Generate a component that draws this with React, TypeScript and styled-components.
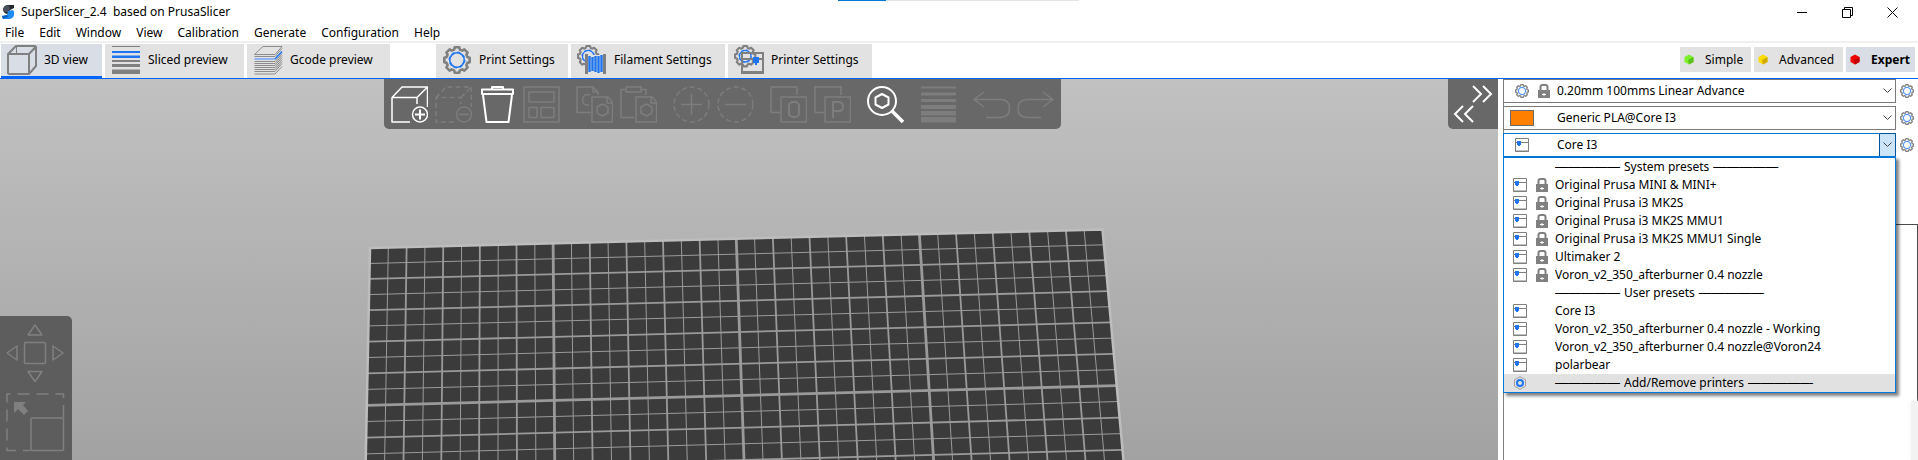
import React from "react";
import styled, { createGlobalStyle } from "styled-components";

const BLUE = "#1f75f0";
const ACCENT = "#0064ff";
const GREY = "#808080";

const GlobalStyle = createGlobalStyle`
  *, *::before, *::after { box-sizing: border-box; }
  html, body { margin: 0; background: #fff; }
  body, button, select {
    font-family: "Noto Sans", "Noto Sans CJK SC", sans-serif;
    font-size: 12px;
    line-height: 18px;
    color: #000;
  }
  button { border: 0; margin: 0; padding: 0; background: none; }
  svg { display: block; flex: none; }
`;

const Window = styled.div`
  display: flex;
  flex-direction: column;
  min-height: 100vh;
`;

const TitleBar = styled.header`
  position: relative;
  display: flex;
  align-items: center;
  height: 24px;
  padding: 0 20px 0 1px;
`;

const Title = styled.h1`
  margin: 0 auto 0 6px;
  font-size: 12px;
  font-weight: 400;
  white-space: pre;
`;

const LoadStrip = styled.div`
  position: absolute;
  top: 0;
  left: 50%;
  display: flex;
  width: 241px;
  height: 1px;
  margin-left: -121px;
  background: #e5e5e5;

  &::before {
    content: "";
    width: 48px;
    background: #0078d7;
  }
`;

const WindowControls = styled.div`
  display: flex;
  gap: 34px;
`;

const WindowButton = styled.button`
  width: 11px;
  height: 20px;
  display: grid;
  place-items: center;
`;

const MenuBar = styled.nav`
  display: flex;
  gap: 15px;
  height: 19px;
  padding: 0 5px;
  border-bottom: 2px solid #f0f0f0;
  line-height: 18px;
`;

const MenuItem = styled.button`
  line-height: 18px;
  height: 18px;
`;

const TabBar = styled.div`
  display: flex;
  align-items: stretch;
  height: 36px;
  padding: 1px 3px 0 1px;
  border-bottom: 1px solid ${ACCENT};
`;

const TabGroup = styled.div`
  display: flex;
  gap: 3px;
  margin-right: 46px;
`;

const ModeGroup = styled.div`
  display: flex;
  gap: 3px;
  margin-left: auto;
  padding-top: 3px;
`;

const Tab = styled.button<{ $active?: boolean; $width: number }>`
  display: flex;
  align-items: center;
  gap: 7px;
  width: ${(p) => p.$width}px;
  padding: 0 0 2px 6px;
  white-space: nowrap;
  background: ${(p) => (p.$active ? "#d9dde6" : "#e2e2e2")};
  box-shadow: ${(p) => (p.$active ? `inset 0 -2px ${ACCENT}` : "none")};
`;

const ModeButton = styled.button<{ $active?: boolean; $width: number }>`
  display: flex;
  align-items: center;
  gap: 10px;
  width: ${(p) => p.$width}px;
  height: 25px;
  padding-left: 4px;
  font-weight: ${(p) => (p.$active ? 700 : 400)};
  background: ${(p) => (p.$active ? "#d9dde6" : "#e2e2e2")};
`;

const Workspace = styled.main`
  display: flex;
  flex: 1;
`;

const Viewport = styled.section`
  position: relative;
  flex: 1;
  min-width: 0;
  background: linear-gradient(#c1c1c1, #a2a2a2);
`;

const Scene = styled.svg`
  position: absolute;
  inset: 0;
  width: 100%;
  height: 100%;
`;

const Overlay = styled.div`
  position: relative;
  display: flex;
  flex-direction: column;
  justify-content: space-between;
  height: 100%;
`;

const TopRow = styled.div`
  display: flex;
  align-items: flex-start;
`;

const ToolbarSlot = styled.div`
  display: flex;
  flex: 1;
  justify-content: center;
  padding-right: 4px;
`;

const Toolbar = styled.div`
  display: flex;
  gap: 16px;
  height: 50px;
  padding: 7px 7px 0;
  border-radius: 0 0 5px 5px;
  background: #686868;
`;

const ToolGroup = styled.div`
  display: flex;
  gap: 7px;
`;

const Tool = styled.button<{ $off?: boolean }>`
  width: 37px;
  height: 37px;
  color: ${(p) => (p.$off ? "#7d7d7d" : "#fff")};
`;

const Collapse = styled.button`
  width: 50px;
  height: 50px;
  border-radius: 0 0 0 5px;
  background: #686868;
  color: #fff;
`;

const Gizmos = styled.div`
  display: flex;
  flex-direction: column;
  align-self: flex-start;
  gap: 10px;
  width: 72px;
  padding: 8px 6px;
  border-radius: 0 5px 0 0;
  background: #5d5d5d;
`;

const Gizmo = styled.button`
  width: 59px;
  height: 59px;
  color: #808080;
`;

const Sidebar = styled.aside`
  display: flex;
  width: 420px;
  padding-left: 5px;
`;

const PresetColumn = styled.div`
  position: relative;
  display: flex;
  flex: 1;
  flex-direction: column;
  gap: 3px;
  border-left: 1px solid #808080;
`;

const PresetRow = styled.div`
  display: flex;
  align-items: center;
  gap: 4px;
  margin-left: -1px;
`;

const Combo = styled.div<{ $open?: boolean }>`
  position: relative;
  display: grid;
  width: 393px;
  height: 24px;
  border: 1px solid ${(p) => (p.$open ? "#0078d7" : "#7a7a7a")};
  background: #fff;

  & > * { grid-area: 1 / 1; }
`;

const ComboSelect = styled.select`
  width: 100%;
  height: 22px;
  padding: 0 24px 0 53px;
  border: 0;
  outline: 0;
  appearance: none;
  background: transparent;
`;

const ComboIcons = styled.span`
  display: flex;
  align-items: center;
  gap: 9px;
  padding-left: 11px;
  pointer-events: none;
`;

const Swatch = styled.span`
  width: 24px;
  height: 16px;
  margin-left: -5px;
  border: 1px solid #6b6b6b;
  background: #ff8000;
`;

const Chevron = styled.span<{ $open?: boolean }>`
  display: grid;
  place-items: center;
  justify-self: end;
  width: 17px;
  height: 24px;
  margin: -1px;
  border: 1px solid ${(p) => (p.$open ? "#005499" : "transparent")};
  background: ${(p) => (p.$open ? "#cce4f7" : "none")};
  pointer-events: none;
`;

const Popup = styled.ul`
  position: absolute;
  z-index: 2;
  top: 77px;
  left: -1px;
  width: 393px;
  margin: 0;
  padding: 0;
  list-style: none;
  border: 1px solid #0078d7;
  border-top-width: 2px;
  background: #fff;
  box-shadow: 3px 3px 3px rgba(0, 0, 0, 0.5);
`;

const Option = styled.li<{ $hover?: boolean }>`
  display: grid;
  grid-template-columns: 23px 19px 1fr;
  align-items: center;
  height: 18px;
  padding-left: 9px;
  white-space: nowrap;
  background: ${(p) => (p.$hover ? "#e1e1e1" : "#fff")};
`;

const OptionText = styled.span`
  display: flex;
  align-items: center;
  grid-column: 3;
  gap: 4px;
`;

const Dashes = styled.span`
  font-family: "Liberation Sans", Arial, sans-serif;
  font-size: 13px;
  line-height: 18px;
`;

const PlatePanel = styled.div`
  display: flex;
  flex: 1;
  justify-content: flex-end;
  margin-top: 64px;
`;

const PanelEdge = styled.div`
  width: 23px;
  height: 177px;
  border: solid #4c4c4c;
  border-width: 1px 1px 0 0;
`;

const PanelSide = styled.div`
  display: flex;
  flex-direction: column;
  align-items: flex-end;
`;

const PanelShade = styled.div`
  flex: 1;
  width: 7px;
  background: #f2f2f2;
  box-shadow: 0 0 5px #f2f2f2;
`;

/* ---------- icons ---------- */

const gearPath = (c: number, outer: number, inner: number) => {
  const pts: string[] = [];
  for (let i = 0; i < 8; i++) {
    const a = (i * Math.PI) / 4 - Math.PI / 2;
    [
      [-0.27, inner],
      [-0.18, outer],
      [0.18, outer],
      [0.27, inner],
    ].forEach(([d, r]) => {
      pts.push(`${(c + r * Math.cos(a + d)).toFixed(2)} ${(c + r * Math.sin(a + d)).toFixed(2)}`);
    });
  }
  return `M${pts.join("L")}Z`;
};

const GearShape = () => (
  <>
    <path d={gearPath(14, 12.9, 10.8)} fill="none" stroke={GREY} strokeWidth="2.6" strokeLinejoin="round" />
    <circle cx="14" cy="14" r="7.2" fill="none" stroke={BLUE} strokeWidth="1.6" />
    <circle cx="14" cy="14" r="8" fill="none" stroke={BLUE} strokeWidth="1" strokeDasharray="3.14 3.14" />
  </>
);

const Gear = () => (
  <svg width="14" height="14" viewBox="0 0 28 28">
    <GearShape />
  </svg>
);

const PrintTabIcon = () => (
  <svg width="30" height="30" viewBox="-1 -1 30 30">
    <GearShape />
  </svg>
);

const Cube = () => (
  <svg width="30" height="30" viewBox="0 0 30 30" fill="none" stroke={GREY} strokeWidth="2" strokeLinejoin="round">
    <path d="M1 9H22V29H2L1 28ZM1 9L9 1H28L29 2V21L22 29M22 9L29 1.5" />
    <path d="M9.5 1V9" strokeWidth="1" />
  </svg>
);

const SlicedIcon = () => (
  <svg width="30" height="30" viewBox="-1 -1 30 30">
    <path d="M0 0h28v1H0ZM0 14h28v2H0ZM0 18h28v3H0ZM0 23.5h28V28H0Z" fill={GREY} />
    <path d="M0 5h28v2H0ZM0 9.5h28v2.500H0Z" fill={BLUE} />
  </svg>
);

const LayersIcon = () => (
  <svg width="30" height="30" viewBox="-1 -1 30 30" fill="none" stroke="#8c8c8c" strokeWidth="1">
    <path d="M0.5 8.500L9 0.500H28L21 8.500Z" />
    {[10, 15, 17, 19, 21, 23, 25].map((y) => (
      <path key={y} d={`M0.5 ${y + 0.5}H21L28 ${y - 7.5}`} />
    ))}
    <path d="M0.5 28H21L28 20.500" />
    <path d="M0.5 13H21" stroke="#8fb4f2" strokeWidth="2" />
    <path d="M21 13L28 5.500" stroke={BLUE} strokeWidth="1.5" />
  </svg>
);

const FilamentIcon = () => (
  <svg width="30" height="30" viewBox="0 0 30 30">
    <g transform="scale(0.8)">
      <GearShape />
    </g>
    <path d="M10 10h17v17H10Z" fill="#e2e2e2" />
    <path d="M8 9h3v20H8ZM26 9h3v20h-3Z" fill={GREY} />
    <path d="M12.5 11V27M15.5 12V26M18.5 11V27M21.5 11V28M24.5 10V27" stroke={BLUE} strokeWidth="2.4" />
  </svg>
);

const PrinterTabIcon = () => (
  <svg width="30" height="30" viewBox="0 0 30 30">
    <g transform="scale(0.8)">
      <GearShape />
    </g>
    <path d="M8 8H29V28H8ZM8 14H29" fill="none" stroke={GREY} strokeWidth="2" />
    <path d="M8 26H29V29H8Z" fill={GREY} />
    <path d="M19 12h6v6h-2v2h-2v-2h-2Z" fill={BLUE} />
  </svg>
);

const PrinterIcon = () => (
  <svg width="14" height="14" viewBox="0 0 14 14">
    <path d="M0.5 0.500H13.500V13.500H0.500ZM0 4.500H14M0 13H14" fill="none" stroke={GREY} />
    <path d="M2 3h4v4H5v1H3V7H2Z" fill={BLUE} />
  </svg>
);

const LockIcon = () => (
  <svg width="12" height="14" viewBox="0 0 12 14">
    <path d="M2.5 7V3Q2.500 1 4.500 1H7.500Q9.500 1 9.500 3V7" fill="none" stroke={GREY} strokeWidth="2" />
    <path d="M0 6h12v8H0Z" fill={GREY} />
    <path d="M4 10.500h4M6 9v3" stroke="#fff" />
  </svg>
);

const WizardIcon = () => (
  <svg width="14" height="14" viewBox="0 0 14 14" fill="none">
    <path d="M7 0.700L12.500 3.800V10.200L7 13.300L1.500 10.200V3.800Z" stroke="#a0a0a0" />
    <circle cx="7" cy="7" r="3" stroke={BLUE} strokeWidth="2" />
  </svg>
);

const ModeDot = ({ light, dark }: { light: string; dark: string }) => (
  <svg width="11" height="11" viewBox="0 0 11 11">
    <path d="M5 0.500L9.500 3V8L5 10.500L0.500 8V3Z" fill={light} />
    <path d="M9.500 3V8L5 10.500L4 6Z" fill={dark} />
  </svg>
);

const Logo = () => (
  <svg width="14" height="16" viewBox="0 0 14 16">
    <path d="M13 1L6 1Q2 2 2 6Q3 10 7 10L9 6L13 4Z" fill="#23272e" />
    <path d="M2 6Q3 2 7 1L9 4L7 8Q4 9 2 6Z" fill="#4a515c" />
    <path d="M7 7L12 6Q14 8 13 11Q12 15 8 15L2 15L1 12L6 11Z" fill="#1d8bf0" />
    <path d="M1 12L6 11L7 13L2 15Z" fill="#0a5fc4" />
  </svg>
);

type ToolName =
  | "add" | "remove" | "trash" | "arrange" | "copy" | "paste" | "plus"
  | "minus" | "objects" | "parts" | "search" | "layers" | "undo" | "redo";

const BOX = "M19 36H1V11.500H26V18M1 11.500L11 1H36.500V21M26 11.500L36.500 1";
const PAGE = "M16 11H32L36.500 16V36H16ZM31 11V17H36M26.500 18L32 21V27L26.500 30L21 27V21Z";
const SQUARES = "M10 26.500H1V1H27V9M11 11H36.500V36H11Z";

const toolArt: Record<ToolName, React.ReactNode> = {
  add: (
    <>
      <path d={BOX} />
      <circle cx="29" cy="28.500" r="7.500" />
      <path d="M29 23.500V33.500M24 28.500H34" strokeWidth="2" />
    </>
  ),
  remove: (
    <>
      <path d={BOX} strokeDasharray="5 3" />
      <circle cx="29" cy="28.500" r="7.500" />
      <path d="M24 28.500H34" />
    </>
  ),
  trash: <path d="M3 3.500H34V8H3ZM13 3V1H24V3M4 9L7.500 36H29.500L33 9" strokeWidth="2" />,
  arrange: <path d="M1 1H36V36H1ZM6 6H31V16H6ZM6 21.500H14V31.500H6ZM18 21.500H31V31.500H18Z" />,
  copy: (
    <>
      <path d="M15 26.500H1V1H17L22 6V9M17 1V6H22M14 9Q7 7 6.500 14Q7 20 13 19" />
      <path d={PAGE} />
    </>
  ),
  paste: (
    <>
      <path d="M14 31.500H1V3.500H6M21 3.500H26V9M6 1H21V6H6Z" />
      <path d={PAGE} />
    </>
  ),
  plus: (
    <>
      <circle cx="18.500" cy="18.500" r="17.500" strokeDasharray="5 3" />
      <path d="M18.500 8V29M8 18.500H29" />
    </>
  ),
  minus: (
    <>
      <circle cx="18.500" cy="18.500" r="17.500" strokeDasharray="5 3" />
      <path d="M8 18.500H29" />
    </>
  ),
  objects: (
    <>
      <path d={SQUARES} />
      <rect x="19" y="16" width="10" height="15" rx="4" strokeWidth="2" />
    </>
  ),
  parts: (
    <>
      <path d={SQUARES} />
      <path d="M19 32V16H25Q29 16.500 29 20.500Q29 25 25 25H19" strokeWidth="2" />
    </>
  ),
  search: (
    <>
      <circle cx="15" cy="15" r="14" strokeWidth="2" />
      <path d="M15 8L21.500 11.500V18.500L15 22L8.500 18.500V11.500Z" strokeWidth="2" />
      <path d="M25 25L36 36" strokeWidth="3.500" />
    </>
  ),
  layers: (
    <path
      d="M1 0.500h35v2H1ZM1 6.500h35v3H1ZM1 13h35v3H1ZM1 19h35v4H1ZM1 25h35v4.500H1ZM1 31h35v5.500H1Z"
      fill="currentColor"
      stroke="none"
    />
  ),
  undo: <path d="M11 6L1 13.500L11 21M1 13.500H28Q36.500 14 36.500 22.500Q36.500 31 28 31.500H13" />,
  redo: <path d="M26 6L36 13.500L26 21M36 13.500H10Q1 14 1 22.500Q1 31 10 31.500H24" />,
};

const toolGroups: { name: ToolName; label: string; off?: boolean }[][] = [
  [
    { name: "add", label: "Add" },
    { name: "remove", label: "Delete", off: true },
    { name: "trash", label: "Delete all" },
    { name: "arrange", label: "Arrange", off: true },
  ],
  [
    { name: "copy", label: "Copy", off: true },
    { name: "paste", label: "Paste", off: true },
  ],
  [
    { name: "plus", label: "Add instance", off: true },
    { name: "minus", label: "Remove instance", off: true },
  ],
  [
    { name: "objects", label: "Split to objects", off: true },
    { name: "parts", label: "Split to parts", off: true },
  ],
  [{ name: "search", label: "Search" }],
  [{ name: "layers", label: "Variable layer height", off: true }],
  [
    { name: "undo", label: "Undo", off: true },
    { name: "redo", label: "Redo", off: true },
  ],
];

const ToolIcon = ({ name }: { name: ToolName }) => (
  <svg width="37" height="37" viewBox="0 0 37 37" fill="none" stroke="currentColor" strokeWidth="1.5" strokeLinejoin="round">
    {toolArt[name]}
  </svg>
);

/* ---------- print bed ---------- */

const CELLS = 40;
const ROWS = 15;
const bedTop = { lx: 370, ly: 169, rx: 1102.5, ry: 150.5 };
const bedLow = { lx: 365.2, ly: 407.5, rx: 1124, ry: 387 };

const lineWidth = (i: number) => (i % 10 === 0 ? 2.8 : i % 2 === 0 ? 1.8 : 1);
const mix = (a: number, b: number, t: number) => a + (b - a) * t;

const Bed = () => {
  const columns = Array.from({ length: CELLS - 1 }, (_, k) => k + 1);
  const rows = Array.from({ length: ROWS - 1 }, (_, k) => k + 1);
  const outline = `M${bedLow.lx} ${bedLow.ly}L${bedTop.lx} ${bedTop.ly}L${bedTop.rx} ${bedTop.ry}L${bedLow.rx} ${bedLow.ry}`;
  return (
    <Scene viewBox="0 0 1498 381" preserveAspectRatio="xMidYMin slice" aria-hidden="true">
      <path d={`${outline}Z`} fill="#3b3b3b" />
      <g stroke="#9a9a9a">
        {columns.map((i) => {
          const t = i / CELLS;
          return (
            <line
              key={i}
              x1={mix(bedTop.lx, bedTop.rx, t)}
              y1={mix(bedTop.ly, bedTop.ry, t)}
              x2={mix(bedLow.lx, bedLow.rx, t)}
              y2={mix(bedLow.ly, bedLow.ry, t)}
              strokeWidth={lineWidth(i)}
            />
          );
        })}
        {rows.map((j) => {
          const t = (j / ROWS) * (0.97 + 0.03 * (j / ROWS));
          return (
            <line
              key={j}
              x1={mix(bedTop.lx, bedLow.lx, t)}
              y1={mix(bedTop.ly, bedLow.ly, t)}
              x2={mix(bedTop.rx, bedLow.rx, t)}
              y2={mix(bedTop.ry, bedLow.ry, t)}
              strokeWidth={lineWidth(j)}
            />
          );
        })}
      </g>
      <path d={outline} fill="none" stroke="#bdbdbd" strokeWidth="2.5" />
    </Scene>
  );
};

/* ---------- data ---------- */

const menus = ["File", "Edit", "Window", "View", "Calibration", "Generate", "Configuration", "Help"];

type Preset = { text: string; kind: "system" | "user" | "heading" | "action" };

const presets: Preset[] = [
  { text: "System presets", kind: "heading" },
  { text: "Original Prusa MINI & MINI+", kind: "system" },
  { text: "Original Prusa i3 MK2S", kind: "system" },
  { text: "Original Prusa i3 MK2S MMU1", kind: "system" },
  { text: "Original Prusa i3 MK2S MMU1 Single", kind: "system" },
  { text: "Ultimaker 2", kind: "system" },
  { text: "Voron_v2_350_afterburner 0.4 nozzle", kind: "system" },
  { text: "User presets", kind: "heading" },
  { text: "Core I3", kind: "user" },
  { text: "Voron_v2_350_afterburner 0.4 nozzle - Working", kind: "user" },
  { text: "Voron_v2_350_afterburner 0.4 nozzle@Voron24", kind: "user" },
  { text: "polarbear", kind: "user" },
  { text: "Add/Remove printers", kind: "action" },
];

const PresetCombo = ({ label, value, icons, open }: { label: string; value: string; icons: React.ReactNode; open?: boolean }) => (
  <PresetRow>
    <Combo $open={open}>
      <ComboSelect aria-label={label} defaultValue={value}>
        <option>{value}</option>
      </ComboSelect>
      <ComboIcons>{icons}</ComboIcons>
      <Chevron $open={open}>
        <svg width="9" height="6" viewBox="0 0 9 6" fill="none" stroke="#444">
          <path d="M0.5 0.500L4.500 4.500L8.500 0.500" />
        </svg>
      </Chevron>
    </Combo>
    <button aria-label={`Edit ${label}`}>
      <Gear />
    </button>
  </PresetRow>
);

export default function App() {
  return (
    <Window>
      <GlobalStyle />
      <TitleBar>
        <LoadStrip />
        <Logo />
        <Title>{"SuperSlicer_2.4  based on PrusaSlicer"}</Title>
        <WindowControls>
          <WindowButton aria-label="Minimize">
            <svg width="11" height="11" stroke="#000"><path d="M0 5.500H10" /></svg>
          </WindowButton>
          <WindowButton aria-label="Restore">
            <svg width="11" height="11" stroke="#000" fill="none">
              <path d="M0.5 2.500H8.500V10.500H0.500ZM2.500 2.500V0.500H10.500V8.500H8.500" />
            </svg>
          </WindowButton>
          <WindowButton aria-label="Close">
            <svg width="11" height="11" stroke="#000"><path d="M0.5 0.500L10.500 10.500M10.500 0.500L0.500 10.500" /></svg>
          </WindowButton>
        </WindowControls>
      </TitleBar>
      <MenuBar>
        {menus.map((m) => <MenuItem key={m}>{m}</MenuItem>)}
      </MenuBar>
      <TabBar>
        <TabGroup>
          <Tab $active $width={101}><Cube />3D view</Tab>
          <Tab $width={139}><SlicedIcon />Sliced preview</Tab>
          <Tab $width={143}><LayersIcon />Gcode preview</Tab>
        </TabGroup>
        <TabGroup>
          <Tab $width={132}><PrintTabIcon />Print Settings</Tab>
          <Tab $width={154}><FilamentIcon />Filament Settings</Tab>
          <Tab $width={144}><PrinterTabIcon />Printer Settings</Tab>
        </TabGroup>
        <ModeGroup>
          <ModeButton $width={71}><ModeDot light="#7cf02c" dark="#5cbf1c" />Simple</ModeButton>
          <ModeButton $width={89}><ModeDot light="#ffdc00" dark="#d0aa00" />Advanced</ModeButton>
          <ModeButton $active $width={69}><ModeDot light="#f00000" dark="#c00000" />Expert</ModeButton>
        </ModeGroup>
      </TabBar>
      <Workspace>
        <Viewport>
          <Bed />
          <Overlay>
            <TopRow>
              <ToolbarSlot>
                <Toolbar>
                  {toolGroups.map((group) => (
                    <ToolGroup key={group[0].name}>
                      {group.map((t) => (
                        <Tool key={t.name} $off={t.off} disabled={t.off} aria-label={t.label}>
                          <ToolIcon name={t.name} />
                        </Tool>
                      ))}
                    </ToolGroup>
                  ))}
                </Toolbar>
              </ToolbarSlot>
              <Collapse aria-label="Collapse sidebar">
                <svg width="50" height="50" viewBox="0 0 50 50" fill="none" stroke="currentColor" strokeWidth="2">
                  <path d="M25 7L33 15L25 23M35 7L43 15L35 23M15 27L7 35L15 43M25 27L17 35L25 43" />
                </svg>
              </Collapse>
            </TopRow>
            <Gizmos>
              <Gizmo aria-label="Move">
                <svg width="59" height="59" viewBox="0 0 59 59" fill="none" stroke="currentColor" strokeWidth="1.5" strokeLinejoin="round">
                  <rect x="18.500" y="18.500" width="21" height="21" rx="1" />
                  <path d="M29 1L36 11H22ZM29 57.500L36 47.500H22ZM1 29L11 22V36ZM57 29L47 22V36Z" />
                </svg>
              </Gizmo>
              <Gizmo aria-label="Scale">
                <svg width="59" height="59" viewBox="0 0 59 59" fill="none" stroke="currentColor" strokeWidth="1.5">
                  <path d="M24 57.500H1V1H57.500V24" strokeDasharray="12 7" strokeDashoffset="5" />
                  <rect x="25" y="25" width="32.500" height="32.500" rx="1" />
                  <path d="M8 9H20L17 12L22 18L18 22L12 16L8 20Z" fill="currentColor" stroke="none" />
                </svg>
              </Gizmo>
            </Gizmos>
          </Overlay>
        </Viewport>
        <Sidebar>
          <PresetColumn>
            <PresetCombo label="Print settings" value="0.20mm 100mms Linear Advance" icons={<><Gear /><LockIcon /></>} />
            <PresetCombo label="Filament" value="Generic PLA@Core I3" icons={<Swatch />} />
            <PresetCombo label="Printer" value="Core I3" open icons={<PrinterIcon />} />
            <Popup role="listbox" aria-label="Printer presets">
              {presets.map((p) => (
                <Option key={p.text} role="option" $hover={p.kind === "action"}>
                  {(p.kind === "system" || p.kind === "user") && <PrinterIcon />}
                  {p.kind === "system" && <LockIcon />}
                  {p.kind === "action" && <WizardIcon />}
                  <OptionText>
                    {p.kind === "heading" || p.kind === "action" ? (
                      <>
                        <Dashes>—————</Dashes>
                        {p.text}
                        <Dashes>—————</Dashes>
                      </>
                    ) : (
                      p.text
                    )}
                  </OptionText>
                </Option>
              ))}
            </Popup>
            <PlatePanel>
              <PanelSide>
                <PanelEdge />
                <PanelShade />
              </PanelSide>
            </PlatePanel>
          </PresetColumn>
        </Sidebar>
      </Workspace>
    </Window>
  );
}
